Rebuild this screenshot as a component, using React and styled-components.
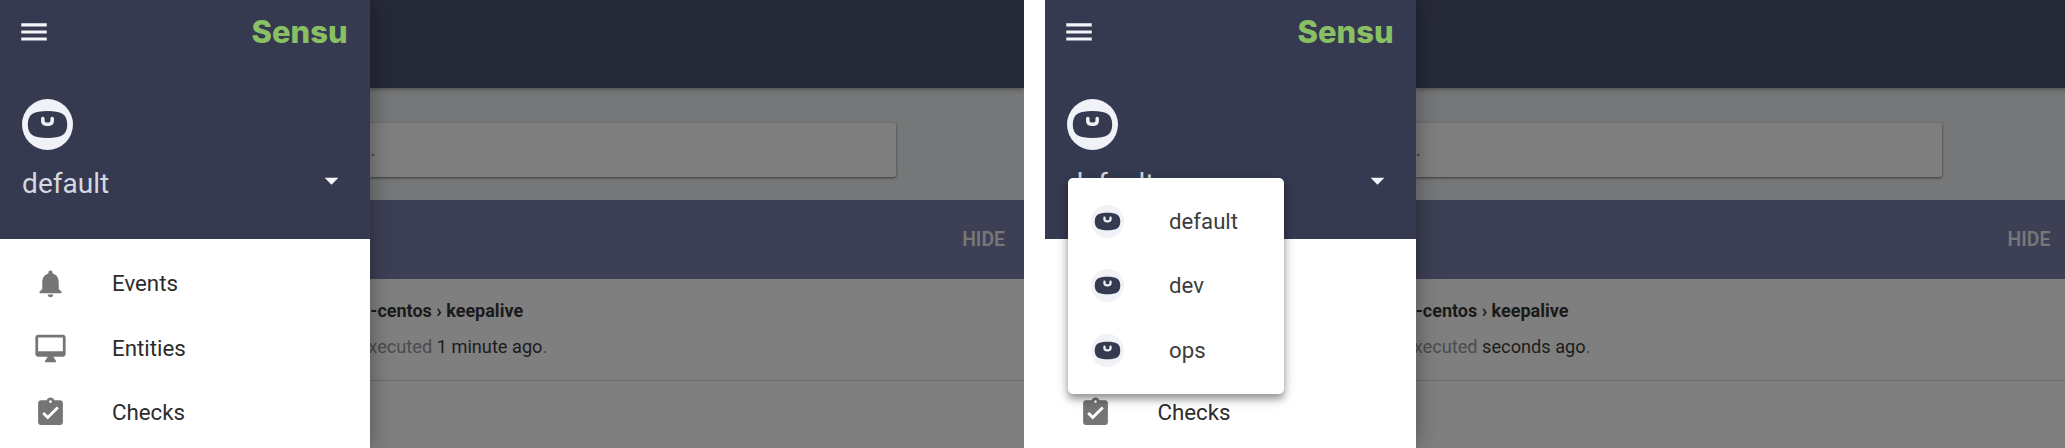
import React from "react";
import styled, { createGlobalStyle } from "styled-components";

const GlobalStyle = createGlobalStyle`
  * { box-sizing: border-box; }
  body {
    margin: 0;
    background: #fff;
    overflow: hidden;
    font-family: Roboto, "Liberation Sans", sans-serif;
  }
`;

const Page = styled.div`
  display: flex;
  gap: 21.4px;
  width: 2065px;
  height: 448px;
  overflow: hidden;
`;

const Screen = styled.section`
  position: relative;
  flex: none;
  display: flex;
  width: 1024px;
  height: 448px;
  overflow: hidden;
`;

const Drawer = styled.aside`
  position: relative;
  z-index: 1;
  flex: none;
  width: 370.3px;
  background: #fff;
  box-shadow: 0 0 22px rgba(0, 0, 0, 0.36);
`;

const DrawerHeader = styled.header`
  height: 239.4px;
  padding: 15px 22px 0 16.6px;
  background: #363a50;
`;

const BrandRow = styled.div`
  display: flex;
  justify-content: space-between;
  height: 84px;
`;

const Wordmark = styled.svg`
  width: 98px;
  height: 36px;
  overflow: visible;
  fill: #8ac064;
  font-family: Inter, sans-serif;
  font-size: 31px;
  font-weight: 800;
`;

const Account = styled.div`
  padding-left: 5px;
`;

const AccountRow = styled.div`
  display: flex;
  align-items: flex-start;
  justify-content: space-between;
  height: 32px;
  margin: 14px 0 0 0.5px;
  color: #d5d8e0;
  font-size: 28px;
  line-height: 40px;
`;

const Icon = styled.svg`
  display: block;
  flex: none;
  width: ${(p) => p.$size}px;
  height: ${(p) => p.$size}px;
  fill: ${(p) => p.$color};
`;

const Face = styled.svg`
  display: block;
  flex: none;
  width: ${(p) => p.$size}px;
  height: ${(p) => p.$size}px;
`;

const Nav = styled.nav`
  padding: 12.2px 0 0 33.5px;
`;

const NavItem = styled.div`
  display: flex;
  align-items: center;
  gap: 45.5px;
  height: 64.5px;
  color: #2c2c2c;
  font-size: 22.3px;
  visibility: ${(p) => (p.$covered ? "hidden" : "visible")};
`;

const Label = styled.span`
  padding-bottom: 1.5px;
`;

const Content = styled.main`
  flex: 1;
  min-width: 0;
  background: #7f7f7f;
`;

const TopBar = styled.div`
  position: relative;
  height: 88px;
  background: #262937;
  box-shadow: 0 1px 5px rgba(0, 0, 0, 0.4);
`;

const SearchArea = styled.div`
  height: 112px;
  padding-top: 35px;
  background: #767778;
`;

const SearchBox = styled.div`
  width: 526px;
  height: 54px;
  border-radius: 0 3px 3px 0;
  background: #7e7f7e;
  box-shadow: 0 1px 3px rgba(0, 0, 0, 0.55);
  color: #444;
  font-size: 20px;
  line-height: 52px;
`;

const ListHeader = styled.div`
  display: flex;
  align-items: center;
  justify-content: flex-end;
  height: 79px;
  padding-right: 19px;
  background: #3d3f54;
  color: #777778;
  font-size: 19.4px;
  font-weight: 600;
`;

const EventRow = styled.div`
  height: 102px;
  padding-top: 20px;
  border-bottom: 1px solid #6d6d6e;
  color: #1a1a1a;
  font-size: 18px;
  line-height: 24px;
  white-space: nowrap;
`;

const EventTitle = styled.div`
  font-weight: 700;
`;

const EventNote = styled.div`
  margin: 12px 0 0 -2px;
  color: #4b4b4b;
  font-size: 18.2px;
`;

const Strong = styled.span`
  color: #1c1c1c;
`;

const Menu = styled.div`
  position: absolute;
  z-index: 2;
  top: 178px;
  left: 22.6px;
  width: 216px;
  height: 216px;
  padding: 11px 0 0 22.6px;
  border-radius: 5px;
  background: #fff;
  box-shadow: 0 5px 7px rgba(0, 0, 0, 0.3), 0 4px 14px rgba(0, 0, 0, 0.2);
`;

const MenuItem = styled.div`
  display: flex;
  align-items: center;
  gap: 45.5px;
  height: 64.5px;
  color: #3c3c3c;
  font-size: 22.2px;
`;

const PATHS = {
  menu: "M3 18h18v-2.2H3V18zm0-4.9h18v-2.2H3v2.2zM3 5.9v2.2h18V5.9H3z",
  caret: "M7 10l5 5 5-5z",
  bell: "M12 22c1.1 0 2-.9 2-2h-4c0 1.1.89 2 2 2zm6-6v-5c0-3.07-1.64-5.64-4.5-6.32V4c0-.83-.67-1.5-1.5-1.5s-1.5.67-1.5 1.5v.68C7.63 5.36 6 7.92 6 11v5l-2 2v1h16v-1l-2-2z",
  desktop:
    "M21 2H3c-1.1 0-2 .9-2 2v12c0 1.1.9 2 2 2h7l-2 3v1h8v-1l-2-3h7c1.1 0 2-.9 2-2V4c0-1.1-.9-2-2-2zm0 12H3V4h18v10z",
  checks:
    "M19 3h-4.18C14.4 1.84 13.3 1 12 1c-1.3 0-2.4.84-2.82 2H5c-1.1 0-2 .9-2 2v14c0 1.1.9 2 2 2h14c1.1 0 2-.9 2-2V5c0-1.1-.9-2-2-2zm-7 0c.55 0 1 .45 1 1s-.45 1-1 1-1-.45-1-1 .45-1 1-1zm-2 14l-4-4 1.41-1.41L10 14.17l6.59-6.59L18 9l-8 8z",
};

function Glyph({ name, size = 33, color = "#757575" }) {
  return (
    <Icon viewBox="0 0 24 24" $size={size} $color={color}>
      <path d={PATHS[name]} />
    </Icon>
  );
}

function NamespaceFace({ size }) {
  return (
    <Face viewBox="0 0 51 51" $size={size}>
      <circle cx="25.5" cy="25.5" r="25.5" fill="#f1f2f7" />
      <path
        d="M25.5 12C39 12 45.2 15 45.2 25.5S39 39 25.5 39 5.8 36 5.8 25.5 12 12 25.5 12z"
        fill="#363a50"
      />
      <path
        d="M20.8 19.4v2.4q0 3.4 3.4 3.4h2.6q3.4 0 3.4-3.4v-2.4"
        fill="none"
        stroke="#f1f2f7"
        strokeWidth="3.5"
        strokeLinecap="round"
      />
    </Face>
  );
}

const NAV = [
  ["bell", "Events"],
  ["desktop", "Entities"],
  ["checks", "Checks"],
];

// How many nav rows the open namespace menu lies over.
const COVERED_ROWS = 2;

function Dashboard({ executed, menu }) {
  return (
    <Screen>
      <Drawer>
        <DrawerHeader>
          <BrandRow>
            <Glyph name="menu" size={34} color="#f4f5f8" />
            <Wordmark viewBox="0 0 98 36">
              <text x="1.6" y="27.5" textLength="96" lengthAdjust="spacingAndGlyphs">
                Sensu
              </text>
            </Wordmark>
          </BrandRow>
          <Account>
            <NamespaceFace size={51} />
            <AccountRow>
              default
              <Glyph name="caret" color="#f4f5f8" />
            </AccountRow>
          </Account>
        </DrawerHeader>
        <Nav>
          {NAV.map(([icon, label], i) => (
            <NavItem key={label} $covered={menu && i < COVERED_ROWS}>
              <Glyph name={icon} />
              <Label>{label}</Label>
            </NavItem>
          ))}
        </Nav>
      </Drawer>
      <Content>
        <TopBar />
        <SearchArea>
          <SearchBox>.</SearchBox>
        </SearchArea>
        <ListHeader>HIDE</ListHeader>
        <EventRow>
          <EventTitle>-centos › keepalive</EventTitle>
          <EventNote>
            xecuted <Strong>{executed}</Strong>.
          </EventNote>
        </EventRow>
      </Content>
      {menu && (
        <Menu>
          {menu.map((name) => (
            <MenuItem key={name}>
              <NamespaceFace size={33} />
              <Label>{name}</Label>
            </MenuItem>
          ))}
        </Menu>
      )}
    </Screen>
  );
}

export default function App() {
  return (
    <>
      <GlobalStyle />
      <Page>
        <Dashboard executed="1 minute ago" />
        <Dashboard executed="seconds ago" menu={["default", "dev", "ops"]} />
      </Page>
    </>
  );
}
